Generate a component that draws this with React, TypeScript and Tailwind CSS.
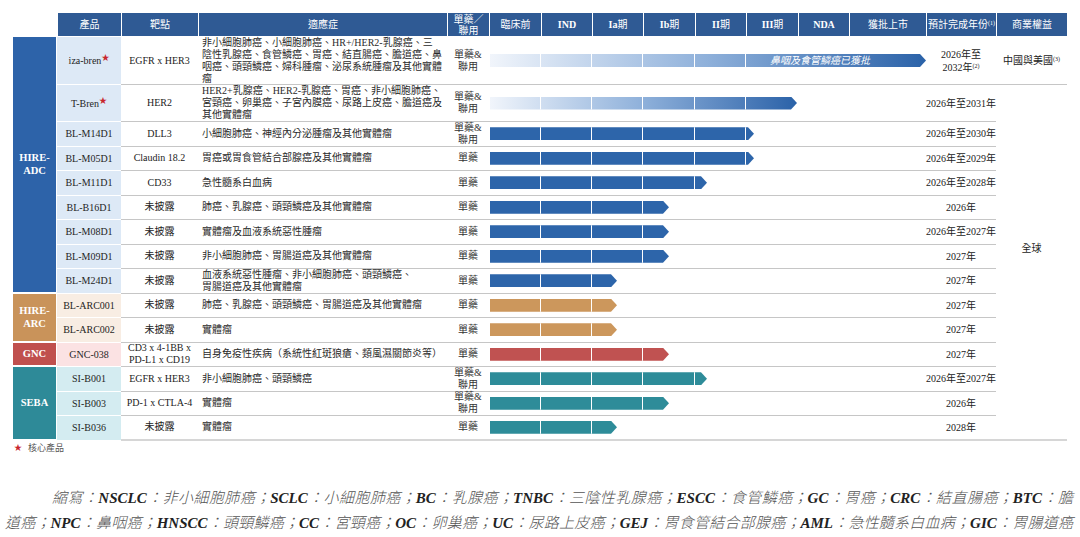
import React from "react";

type Cat = "adc" | "arc" | "gnc" | "seba";

type Row = {
  cat: Cat;
  product: string;
  star?: boolean;
  target: string[];
  ind: string[];
  combo: boolean;
  end: number;
  gradient?: boolean;
  label?: string;
  year: React.ReactNode;
};

const FONT = "font-['Liberation_Serif','Noto_Sans_CJK_TC',serif]";

const barColor: Record<Cat, string> = {
  adc: "bg-[#2d65aa]",
  arc: "bg-[#cc975c]",
  gnc: "bg-[#c05251]",
  seba: "bg-[#2e8c99]",
};

const productBg: Record<Cat, string> = {
  adc: "bg-[#dde9f6]",
  arc: "bg-[#f8ede3]",
  gnc: "bg-[#fbe2e3]",
  seba: "bg-[#d4ecf1]",
};

const Sup = ({ n }: { n: number }) => (
  <sup className="text-[6px]">({n})</sup>
);

const rows: Row[] = [
  {
    cat: "adc",
    product: "iza-bren",
    star: true,
    target: ["EGFR x HER3"],
    ind: [
      "非小細胞肺癌、小細胞肺癌、HR+/HER2-乳腺癌、三",
      "陰性乳腺癌、食管鱗癌、胃癌、結直腸癌、膽道癌、鼻",
      "咽癌、頭頸鱗癌、婦科腫瘤、泌尿系統腫瘤及其他實體",
      "瘤",
    ],
    combo: true,
    end: 926,
    gradient: true,
    label: "鼻咽及食管鱗癌已獲批",
    year: (
      <>
        <span>2026年至</span>
        <span>
          2032年
          <Sup n={2} />
        </span>
      </>
    ),
  },
  {
    cat: "adc",
    product: "T-Bren",
    star: true,
    target: ["HER2"],
    ind: [
      "HER2+乳腺癌、HER2-乳腺癌、胃癌、非小細胞肺癌、",
      "宮頸癌、卵巢癌、子宮內膜癌、尿路上皮癌、膽道癌及",
      "其他實體瘤",
    ],
    combo: true,
    end: 797,
    gradient: true,
    year: "2026年至2031年",
  },
  {
    cat: "adc",
    product: "BL-M14D1",
    target: ["DLL3"],
    ind: ["小細胞肺癌、神經內分泌腫瘤及其他實體瘤"],
    combo: true,
    end: 754,
    year: "2026年至2030年",
  },
  {
    cat: "adc",
    product: "BL-M05D1",
    target: ["Claudin 18.2"],
    ind: ["胃癌或胃食管結合部腺癌及其他實體瘤"],
    combo: false,
    end: 754,
    year: "2026年至2029年",
  },
  {
    cat: "adc",
    product: "BL-M11D1",
    target: ["CD33"],
    ind: ["急性髓系白血病"],
    combo: false,
    end: 707,
    year: "2026年至2028年",
  },
  {
    cat: "adc",
    product: "BL-B16D1",
    target: ["未披露"],
    ind: ["肺癌、乳腺癌、頭頸鱗癌及其他實體瘤"],
    combo: false,
    end: 669,
    year: "2026年",
  },
  {
    cat: "adc",
    product: "BL-M08D1",
    target: ["未披露"],
    ind: ["實體瘤及血液系統惡性腫瘤"],
    combo: false,
    end: 669,
    year: "2026年至2027年",
  },
  {
    cat: "adc",
    product: "BL-M09D1",
    target: ["未披露"],
    ind: ["非小細胞肺癌、胃腸道癌及其他實體瘤"],
    combo: false,
    end: 669,
    year: "2027年",
  },
  {
    cat: "adc",
    product: "BL-M24D1",
    target: ["未披露"],
    ind: ["血液系統惡性腫瘤、非小細胞肺癌、頭頸鱗癌、", "胃腸道癌及其他實體瘤"],
    combo: false,
    end: 617,
    year: "2027年",
  },
  {
    cat: "arc",
    product: "BL-ARC001",
    target: ["未披露"],
    ind: ["肺癌、乳腺癌、頭頸鱗癌、胃腸道癌及其他實體瘤"],
    combo: false,
    end: 617,
    year: "2027年",
  },
  {
    cat: "arc",
    product: "BL-ARC002",
    target: ["未披露"],
    ind: ["實體瘤"],
    combo: false,
    end: 617,
    year: "2027年",
  },
  {
    cat: "gnc",
    product: "GNC-038",
    target: ["CD3 x 4-1BB x", "PD-L1 x CD19"],
    ind: ["自身免疫性疾病（系統性紅斑狼瘡、類風濕關節炎等）"],
    combo: false,
    end: 669,
    year: "2027年",
  },
  {
    cat: "seba",
    product: "SI-B001",
    target: ["EGFR x HER3"],
    ind: ["非小細胞肺癌、頭頸鱗癌"],
    combo: true,
    end: 707,
    year: "2026年至2027年",
  },
  {
    cat: "seba",
    product: "SI-B003",
    target: ["PD-1 x CTLA-4"],
    ind: ["實體瘤"],
    combo: true,
    end: 669,
    year: "2026年",
  },
  {
    cat: "seba",
    product: "SI-B036",
    target: ["未披露"],
    ind: ["實體瘤"],
    combo: false,
    end: 617,
    year: "2028年",
  },
];

// column boundaries inside the phase area, measured from the bar start
const SEPS = [51, 102, 153, 205, 256];
const BAR_START = 490;

function Bar({ row }: { row: Row }) {
  const width = row.end - BAR_START;
  const stops = SEPS.filter((s) => s < width - 6);
  const edges = [0, ...stops];
  const fill = row.gradient
    ? "bg-linear-to-r from-[#f1f5fb] via-[#8eb0da] to-[#2a62a8]"
    : barColor[row.cat];
  return (
    <div
      className={`flex h-[13px] [clip-path:polygon(0_0,calc(100%_-_6px)_0,100%_50%,calc(100%_-_6px)_100%,0_100%)] ${fill}`}
      style={{ width }}
    >
      {stops.map((s, i) => (
        <div
          key={s}
          className="h-full shrink-0 border-r-[1.5px] border-white"
          style={{ width: s - edges[i] }}
        />
      ))}
      <div className="flex h-full flex-1 items-center">
        {row.label && (
          <span className="pl-[24px] text-[10px] leading-none whitespace-nowrap text-white italic">
            {row.label}
          </span>
        )}
      </div>
    </div>
  );
}

const headCell =
  "flex flex-col items-center justify-center border-b border-l-[1.5px] border-white bg-[#2f5a94] leading-[11px] text-white";

function Category({ className, lines }: { className: string; lines: string[] }) {
  return (
    <div
      className={`col-start-1 flex flex-col items-center justify-center border-r-[1.5px] border-b-2 border-white text-[10.5px] leading-[13px] font-bold text-white ${className}`}
    >
      {lines.map((l) => (
        <span key={l}>{l}</span>
      ))}
    </div>
  );
}

const Ab = ({ t }: { t: string }) => <b className="font-bold text-[#222]">{t}</b>;

export default function App() {
  return (
    <div className={`h-[537px] w-[1080px] overflow-hidden bg-white pt-[13px] ${FONT}`}>
      <div className="ml-[13px] grid w-[1054px] grid-cols-[44px_64px_77px_249px_42px_52px_51px_51px_52px_51px_52px_51px_77px_70px_71px] grid-rows-[24px_48px_37px_repeat(13,24.5px)] text-[10px] text-[#222]">
        {/* category blocks and merged cell */}
        <Category className="row-span-9 row-start-2 bg-[#2d63a9]" lines={["HIRE-", "ADC"]} />
        <Category className="row-span-2 row-start-11 bg-[#c9935a]" lines={["HIRE-", "ARC"]} />
        <Category className="row-span-1 row-start-13 bg-[#c0504e]" lines={["GNC"]} />
        <Category className="row-span-3 row-start-14 bg-[#2e8a98]" lines={["SEBA"]} />
        <div className="col-start-15 row-span-14 row-start-3 flex items-center justify-center border-b-2 border-[#d6d6d6] pb-[26px]">
          全球
        </div>

        {/* header */}
        <div />
        <div className={`${headCell} border-l-0`}>產品</div>
        <div className={headCell}>靶點</div>
        <div className={headCell}>適應症</div>
        <div className={headCell}>
          <span>單藥／</span>
          <span>聯用</span>
        </div>
        <div className={headCell}>臨床前</div>
        <div className={`${headCell} font-bold`}>IND</div>
        <div className={headCell}>
          <span>
            <b>Ia</b>期
          </span>
        </div>
        <div className={headCell}>
          <span>
            <b>Ib</b>期
          </span>
        </div>
        <div className={headCell}>
          <span>
            <b>II</b>期
          </span>
        </div>
        <div className={headCell}>
          <span>
            <b>III</b>期
          </span>
        </div>
        <div className={`${headCell} font-bold`}>NDA</div>
        <div className={headCell}>獲批上市</div>
        <div className={headCell}>
          <span className="whitespace-nowrap">
            預計完成年份
            <Sup n={1} />
          </span>
        </div>
        <div className={headCell}>商業權益</div>

        {/* body */}
        {rows.map((row, i) => {
          const last = i === rows.length - 1;
          const line = last
            ? "border-b-2 border-[#d6d6d6]"
            : "border-b-[1.5px] border-[#c6c6c6]";
          return (
            <React.Fragment key={row.product}>
              <div
                className={`flex items-center justify-center border-b-[1.5px] border-white text-[10px] text-[#1f1f1f] ${productBg[row.cat]}`}
              >
                <span className="whitespace-nowrap">
                  {row.product}
                  {row.star && (
                    <span className="relative -top-[4px] text-[8px] text-[#c8262c]">★</span>
                  )}
                </span>
              </div>
              <div className={`flex flex-col items-center justify-center leading-[12px] ${line}`}>
                {row.target.map((t) => (
                  <span key={t} className="whitespace-nowrap">
                    {t}
                  </span>
                ))}
              </div>
              <div
                className={`flex flex-col items-start justify-center pl-[4px] leading-[12px] text-[#2a2a2a] ${line}`}
              >
                {row.ind.map((t) => (
                  <span key={t} className="whitespace-nowrap">
                    {t}
                  </span>
                ))}
              </div>
              <div className={`flex flex-col items-center justify-center leading-[12px] text-[#333] ${line}`}>
                {row.combo ? (
                  <>
                    <span>單藥&amp;</span>
                    <span>聯用</span>
                  </>
                ) : (
                  <span>單藥</span>
                )}
              </div>
              <div className={`col-span-8 flex items-center pl-[1px] ${line}`}>
                <Bar row={row} />
              </div>
              <div
                className={`flex flex-col items-center justify-center leading-[13px] whitespace-nowrap ${line}`}
              >
                {row.year}
              </div>
              {i === 0 && (
                <div className={`flex items-center justify-center ${line}`}>
                  <span className="whitespace-nowrap">
                    中國與美國
                    <Sup n={3} />
                  </span>
                </div>
              )}
            </React.Fragment>
          );
        })}
      </div>

      <div className="mt-px flex items-center gap-[6px] pl-[14px] text-[9px] leading-[12px] text-[#555]">
        <span className="text-[8px] text-[#c8262c]">★</span>
        <span>核心產品</span>
      </div>

      <div className="mt-[32px] pr-[7px] pl-[5px] text-[15px] leading-[25px] font-light text-[#555] italic">
        <div className="pl-[47px] text-justify [text-align-last:justify]">
          縮寫：<Ab t="NSCLC" />：非小細胞肺癌；<Ab t="SCLC" />：小細胞肺癌；<Ab t="BC" />：乳腺癌；
          <Ab t="TNBC" />：三陰性乳腺癌；<Ab t="ESCC" />：食管鱗癌；<Ab t="GC" />：胃癌；
          <Ab t="CRC" />：結直腸癌；<Ab t="BTC" />：膽
        </div>
        <div className="text-justify [text-align-last:justify]">
          道癌；<Ab t="NPC" />：鼻咽癌；<Ab t="HNSCC" />：頭頸鱗癌；<Ab t="CC" />：宮頸癌；
          <Ab t="OC" />：卵巢癌；<Ab t="UC" />：尿路上皮癌；<Ab t="GEJ" />：胃食管結合部腺癌；
          <Ab t="AML" />：急性髓系白血病；<Ab t="GIC" />：胃腸道癌
        </div>
      </div>
    </div>
  );
}
